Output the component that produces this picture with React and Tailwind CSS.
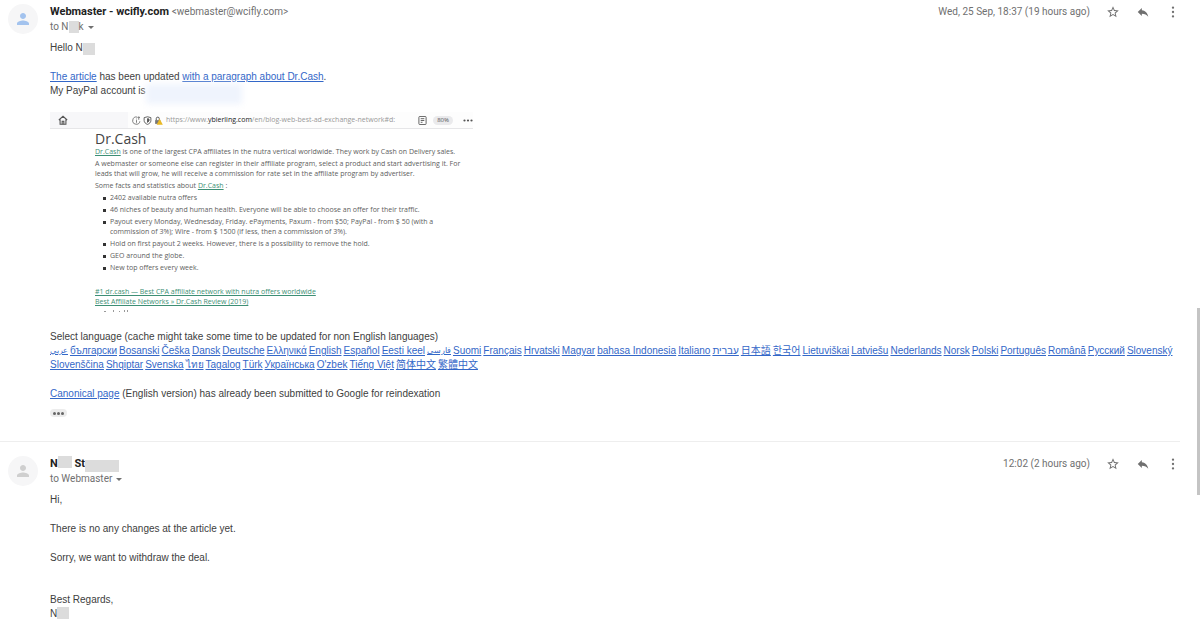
import clsx from 'clsx';

const languages = [
  'عربي', 'български', 'Bosanski', 'Češka', 'Dansk', 'Deutsche', 'Ελληνικά', 'English', 'Español',
  'Eesti keel', 'فارسی', 'Suomi', 'Français', 'Hrvatski', 'Magyar', 'bahasa Indonesia', 'Italiano',
  'עברית', '日本語', '한국어', 'Lietuviškai', 'Latviešu', 'Nederlands', 'Norsk', 'Polski', 'Português',
  'Română', 'Русский', 'Slovenský', 'Slovenščina', 'Shqiptar', 'Svenska', 'ไทย', 'Tagalog', 'Türk',
  'Українська', "O'zbek", 'Tiếng Việt', '简体中文', '繁體中文',
];

// Arabic script runs wide in the fallback font
const compact = ['عربي', 'فارسی'];

const facts = [
  '2402 available nutra offers',
  '46 niches of beauty and human health. Everyone will be able to choose an offer for their traffic.',
  'Payout every Monday, Wednesday, Friday. ePayments, Paxum - from $50; PayPal - from $ 50 (with a commission of 3%); Wire - from $ 1500 (if less, then a commission of 3%).',
  'Hold on first payout 2 weeks. However, there is a possibility to remove the hold.',
  'GEO around the globe.',
  'New top offers every week.',
];

function Redacted({ className }) {
  return <span className={clsx('inline-block align-top bg-[#dcdcdc]', className)} />;
}

function MailLink({ className, children }) {
  return <a href="#" className={clsx('text-[#3367c8] underline', className)}>{children}</a>;
}

function Avatar({ className }) {
  return (
    <div className={clsx('w-[30px] h-[30px] shrink-0 rounded-full bg-[#f6f6f7] flex items-center justify-center', className)}>
      <svg className="w-[18px] h-[18px]" viewBox="0 0 24 24" fill="currentColor">
        <path d="M12 12c2.2 0 4-1.8 4-4s-1.8-4-4-4-4 1.8-4 4 1.8 4 4 4zm0 2c-2.7 0-8 1.3-8 4v2h16v-2c0-2.7-5.3-4-8-4z" />
      </svg>
    </div>
  );
}

function Actions({ date }) {
  return (
    <div className="flex items-center h-4 text-[#707070]">
      <time className="text-[10px] leading-4 mr-4">{date}</time>
      <button type="button" aria-label="Star" className="mr-4">
        <svg className="w-[14px] h-[14px]" viewBox="0 0 24 24" fill="currentColor">
          <path d="M22 9.24l-7.19-.62L12 2 9.19 8.63 2 9.24l5.46 4.73L5.82 21 12 17.27 18.18 21l-1.63-7.03L22 9.24zM12 15.4l-3.76 2.27 1-4.28-3.32-2.88 4.38-.38L12 6.1l1.71 4.04 4.38.38-3.32 2.88 1 4.28L12 15.4z" />
        </svg>
      </button>
      <button type="button" aria-label="Reply" className="mr-4">
        <svg className="w-[14px] h-[14px]" viewBox="0 0 24 24" fill="currentColor">
          <path d="M10 9V5l-7 7 7 7v-4.1c5 0 8.5 1.6 11 5.1-1-5-4-10-11-11z" />
        </svg>
      </button>
      <button type="button" aria-label="More">
        <svg className="w-[14px] h-[14px]" viewBox="0 0 24 24" fill="currentColor">
          <circle cx="12" cy="4.5" r="2" />
          <circle cx="12" cy="12" r="2" />
          <circle cx="12" cy="19.5" r="2" />
        </svg>
      </button>
    </div>
  );
}

function Message({ avatarClass, from, to, date, children }) {
  return (
    <article className="flex gap-3 pl-2 pt-1 pr-5">
      <Avatar className={avatarClass} />
      <div className="flex-1 min-w-0">
        <header className="flex justify-between font-[Roboto,sans-serif]">
          <div>
            <h2 className="h-4 text-[11px] leading-4 text-[#222]">{from}</h2>
            <button type="button" className="flex items-center h-[14px] text-[10px] leading-[14px] text-[#707070]">
              {to}
              <svg className="ml-1 w-[6px] h-[3px]" viewBox="0 0 6 3" fill="currentColor">
                <path d="M0 0h6L3 3z" />
              </svg>
            </button>
          </div>
          <Actions date={date} />
        </header>
        <div className="pt-[7px] text-[10px] leading-[14px] text-[#404040]">{children}</div>
      </div>
    </article>
  );
}

function AddressBar() {
  return (
    <div className="flex items-center h-[17px] bg-[#f7f7f9] border-b border-[#e6e6e8] text-[#555]">
      <svg className="ml-2 w-[10px] h-[10px]" viewBox="0 0 12 12" fill="none" stroke="currentColor" strokeWidth="1.3">
        <path d="M1 6l5-4.5L11 6M2.5 5.5V11h7V5.5" />
        <path d="M5 11V7.5h2V11" />
      </svg>
      <div className="ml-15 flex-1 min-w-0 h-full flex items-center gap-[2px] bg-[#fdfdfd] pl-1">
        <svg className="w-[9px] h-[9px] shrink-0" viewBox="0 0 12 12" fill="none" stroke="currentColor" strokeWidth="1">
          <path d="M7 1.5a4.8 4.8 0 1 0 3.5 5.5M6 5.5V9M6 3.5v1M9 1v4M7.5 2.5L9 1l1.5 1.5" />
        </svg>
        <svg className="w-[9px] h-[9px] shrink-0" viewBox="0 0 12 12" fill="none" stroke="currentColor" strokeWidth="1.2">
          <path d="M6 1l4.5 1.2V6c0 2.5-2 4.3-4.5 5.2C3.5 10.3 1.5 8.5 1.5 6V2.2z" />
          <path d="M6 3.5v5l2-2v-2.5z" fill="currentColor" />
        </svg>
        <svg className="w-[9px] h-[9px] shrink-0" viewBox="0 0 12 12">
          <path d="M3 6V3.5a2 2 0 0 1 4 0V6" fill="none" stroke="#555" strokeWidth="1.3" />
          <path d="M1.5 5.5h7v5h-7z" fill="#777" />
          <path d="M7.5 3.5l4.3 8H3.5z" fill="#e9b824" />
        </svg>
        <span className="ml-px text-[7px] leading-4 text-[#999] whitespace-nowrap">
          https://www.<span className="text-[#222]">ybierling.com</span>/en/blog-web-best-ad-exchange-network#d:
        </span>
      </div>
      <div className="h-full flex items-center bg-[#fdfdfd] gap-[6px]">
        <svg className="w-[9px] h-[9px]" viewBox="0 0 10 10" fill="none" stroke="currentColor">
          <rect x="1" y="0.5" width="8" height="9" rx="1" />
          <path d="M3 3h4M3 5h4M3 7h2" />
        </svg>
        <span className="bg-[#eaeaec] rounded-full px-1 text-[6px] leading-[9px]">80%</span>
        <svg className="ml-1 w-[10px] h-[3px]" viewBox="0 0 10 3" fill="currentColor">
          <circle cx="1.5" cy="1.5" r="1.1" />
          <circle cx="5" cy="1.5" r="1.1" />
          <circle cx="8.5" cy="1.5" r="1.1" />
        </svg>
      </div>
    </div>
  );
}

function GreenLink({ children }) {
  return <a href="#" className="text-[#3d8f75] underline">{children}</a>;
}

function ArticlePreview() {
  return (
    <figure className="w-[423px] max-w-full font-['Open_Sans',sans-serif] text-[#606060]">
      <AddressBar />
      <div className="pl-[45px] pt-[2px] text-[7px] leading-[10px]">
        <h3 className="text-sm leading-4 text-[#444]">Dr.Cash</h3>
        <p><GreenLink>Dr.Cash</GreenLink> is one of the largest CPA affiliates in the nutra vertical worldwide. They work by Cash on Delivery sales.</p>
        <p className="mt-[2px]">
          A webmaster or someone else can register in their affiliate program, select a product and start advertising it. For
          leads that will grow, he will receive a commission for rate set in the affiliate program by advertiser.
        </p>
        <p className="mt-[2px]">Some facts and statistics about <GreenLink>Dr.Cash</GreenLink> :</p>
        <ul className="mt-[2px] flex flex-col gap-[2px] pl-2 pr-8">
          {facts.map((fact) => (
            <li key={fact} className="flex gap-1">
              <span className="mt-1 w-[3px] h-[3px] shrink-0 bg-[#333]" />
              {fact}
            </li>
          ))}
        </ul>
        <p className="mt-[14px]"><GreenLink>#1 dr.cash — Best CPA affiliate network with nutra offers worldwide</GreenLink></p>
        <p><GreenLink>Best Affiliate Networks » Dr.Cash Review (2019)</GreenLink></p>
        {/* tops of the next line, where the capture ends */}
        <svg className="mt-[3px] ml-2 w-7 h-[2px]" viewBox="0 0 28 2" fill="#999">
          <path d="M1 1h2v1H1zM10 0h1v2h-1zM16 1h1v1h-1zM21 0h1v2h-1zM24 0h1v2h-1z" />
        </svg>
      </div>
    </figure>
  );
}

export default function App() {
  return (
    <main className="relative min-h-screen overflow-hidden bg-white font-['Liberation_Sans','Noto_Sans_CJK_SC',sans-serif]">
      <Message
        avatarClass="text-[#a3c3ee]"
        from={<><b>Webmaster - wcifly.com</b> <span className="text-[10px] text-[#707070]">&lt;webmaster@wcifly.com&gt;</span></>}
        to={<>to N<Redacted className="w-[10px] h-3" />k</>}
        date="Wed, 25 Sep, 18:37 (19 hours ago)"
      >
        <p>Hello N<Redacted className="w-3 h-3 mt-[2px]" /></p>
        <p className="mt-[15px]">
          <MailLink>The article</MailLink> has been updated <MailLink>with a paragraph about Dr.Cash</MailLink>.
        </p>
        <p className="flex mb-[14px]">
          My PayPal account is
          <span className="w-24 h-5 -mb-[6px] bg-[#eff4fd] blur-[3px]" />
        </p>
        <ArticlePreview />
        <p className="mt-[18px]">Select language (cache might take some time to be updated for non English languages)</p>
        <nav className="flex flex-wrap gap-x-[2px] mb-[15px]">
          {languages.map((name) => (
            <MailLink key={name} className={compact.includes(name) && 'text-[8px]'}>{name}</MailLink>
          ))}
        </nav>
        <p><MailLink>Canonical page</MailLink> (English version) has already been submitted to Google for reindexation</p>
        <button type="button" aria-label="Show trimmed content" className="mt-2 flex items-center justify-center gap-px w-[17px] h-2 rounded-sm bg-[#ececec]">
          <span className="w-[3px] h-[3px] rounded-full bg-[#666]" />
          <span className="w-[3px] h-[3px] rounded-full bg-[#666]" />
          <span className="w-[3px] h-[3px] rounded-full bg-[#666]" />
        </button>
      </Message>

      <hr className="mt-6 mr-5 mb-[10px] border-[#eeeeee]" />

      <Message
        avatarClass="text-[#cfcfcf]"
        from={<b>N<Redacted className="w-[14px] h-3" /> St<Redacted className="w-[34px] h-3 mt-1" /></b>}
        to="to Webmaster"
        date="12:02 (2 hours ago)"
      >
        <p>Hi,</p>
        <p className="mt-[15px]">There is no any changes at the article yet.</p>
        <p className="mt-[15px]">Sorry, we want to withdraw the deal.</p>
        <p className="mt-7">Best Regards,</p>
        <p>N<Redacted className="w-3 h-3" /></p>
      </Message>

      <div className="absolute right-0 top-[308px] w-[3px] h-[187px] bg-[#c4c4c4]" />
    </main>
  );
}
